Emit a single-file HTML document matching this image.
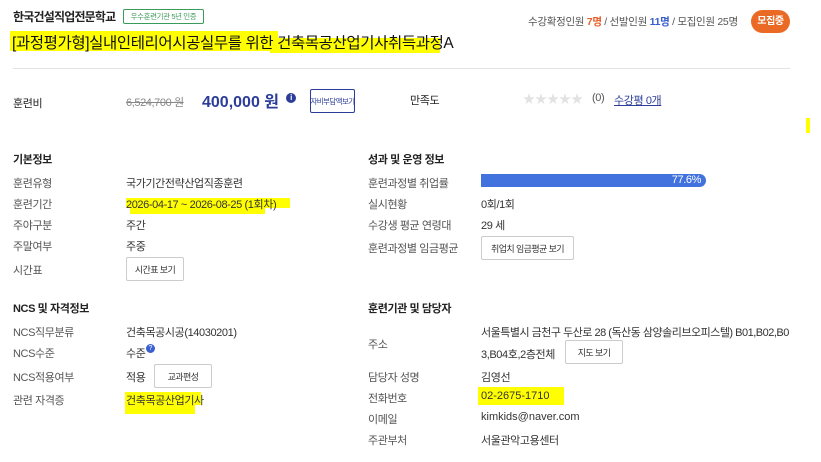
<!DOCTYPE html>
<html><head><meta charset="utf-8"><style>
*{margin:0;padding:0;box-sizing:border-box}
body{width:821px;height:462px;background:#fff;font-family:"Liberation Sans","Noto Sans CJK KR",sans-serif;color:#333;position:relative;overflow:hidden;font-size:11px;letter-spacing:-0.4px}
.a{position:absolute;white-space:nowrap}
.hl{position:absolute;background:#ffff00}
.btn{position:absolute;border:1px solid #ccc;border-radius:2px;background:#fff;font-size:9px;color:#333;display:flex;align-items:center;justify-content:center;white-space:nowrap;letter-spacing:-0.6px}
.lab{color:#555}
.h{font-weight:bold;color:#222;font-size:11px}
</style></head><body>
<div class="a" style="left:13px;top:8px;font-size:12px;font-weight:bold;color:#222;letter-spacing:-0.8px">한국건설직업전문학교</div>
<div class="a" style="left:123px;top:9px;width:81px;height:15px;border:1px solid #3a9a5a;border-radius:2px;color:#3a9a5a;font-size:7.5px;line-height:13px;text-align:center">우수훈련기관 5년 인증</div>
<div class="hl" style="left:10px;top:31px;width:268px;height:20px"></div>
<div class="hl" style="left:270px;top:38px;width:170px;height:15px"></div>
<div class="a" style="left:12px;top:31px;font-size:15.5px;color:#111;letter-spacing:-0.4px">[과정평가형]실내인테리어시공실무를 위한 건축목공산업기사취득과정A</div>
<div class="a" style="left:528px;top:14px;font-size:10.5px;color:#555;letter-spacing:-0.3px">수강확정인원 <b style="color:#e8602c">7명</b> / 선발인원 <b style="color:#3a5fd0">11명</b> / 모집인원 25명</div>
<div class="a" style="left:751px;top:10px;width:39px;height:23px;border-radius:12px;background:#ea6a25;color:#fff;font-size:10px;font-weight:bold;line-height:23px;text-align:center">모집중</div>
<div class="a" style="left:13px;top:68px;width:777px;height:1px;background:#e3e3e3"></div>
<div class="a" style="left:13px;top:95px;font-size:11px;color:#222">훈련비</div>
<div class="a" style="left:126px;top:94px;font-size:11px;color:#888;text-decoration:line-through">6,524,700 원</div>
<div class="a" style="left:202px;top:88px;font-size:16px;color:#2c3d99;font-weight:bold;letter-spacing:0">400,000 원</div>
<div class="a" style="left:286px;top:93px;width:10px;height:10px;border-radius:50%;background:#2c3d99;color:#fff;font-size:8px;line-height:10px;text-align:center;font-weight:bold">i</div>
<div class="btn" style="left:310px;top:89px;width:45px;height:24px;border-color:#2c3d99;color:#2c3d99;font-size:7.5px">자비부담액보기</div>
<div class="a" style="left:410px;top:92px;font-size:11px;color:#222">만족도</div>
<div class="a" style="left:523px;top:90px;font-size:12px;color:#e2e2e2;letter-spacing:0">★★★★★</div>
<div class="a" style="left:592px;top:92px;font-size:11px;color:#555">(0)</div>
<div class="a" style="left:614px;top:92px;font-size:11px;color:#2c3d99;text-decoration:underline">수강평 0개</div>
<div class="hl" style="left:806px;top:118px;width:4px;height:15px"></div>

<div class="a h" style="left:13px;top:151px">기본정보</div>
<div class="a lab" style="left:13px;top:175px">훈련유형</div><div class="a" style="left:126px;top:175px">국가기간전략산업직종훈련</div>
<div class="hl" style="left:126px;top:198px;width:164px;height:10px"></div><div class="hl" style="left:130px;top:206px;width:135px;height:8px"></div>
<div class="a lab" style="left:13px;top:196px">훈련기간</div><div class="a" style="left:126px;top:196px">2026-04-17 ~ 2026-08-25 (1회차)</div>
<div class="a lab" style="left:13px;top:217px">주야구분</div><div class="a" style="left:126px;top:217px">주간</div>
<div class="a lab" style="left:13px;top:238px">주말여부</div><div class="a" style="left:126px;top:238px">주중</div>
<div class="a lab" style="left:13px;top:262px">시간표</div><div class="btn" style="left:126px;top:257px;width:58px;height:24px">시간표 보기</div>

<div class="a h" style="left:368px;top:151px">성과 및 운영 정보</div>
<div class="a lab" style="left:368px;top:175px">훈련과정별 취업률</div>
<div class="a" style="left:481px;top:174px;width:225px;height:13px;background:#4272dd;border-radius:0 7px 7px 0;color:#fff;font-size:11px;line-height:13px;text-align:right;padding-right:5px">77.6%</div>
<div class="a lab" style="left:368px;top:196px">실시현황</div><div class="a" style="left:481px;top:196px">0회/1회</div>
<div class="a lab" style="left:368px;top:217px">수강생 평균 연령대</div><div class="a" style="left:481px;top:217px">29 세</div>
<div class="a lab" style="left:368px;top:240px">훈련과정별 임금평균</div><div class="btn" style="left:481px;top:236px;width:93px;height:24px">취업치 임금평균 보기</div>

<div class="a h" style="left:13px;top:300px">NCS 및 자격정보</div>
<div class="a lab" style="left:13px;top:324px">NCS직무분류</div><div class="a" style="left:126px;top:324px">건축목공시공(14030201)</div>
<div class="a lab" style="left:13px;top:345px">NCS수준</div><div class="a" style="left:126px;top:345px">수준</div>
<div class="a" style="left:146px;top:344px;width:9px;height:9px;border-radius:50%;background:#3a5fd0;color:#fff;font-size:7px;line-height:9px;text-align:center;letter-spacing:0">?</div>
<div class="a lab" style="left:13px;top:369px">NCS적용여부</div><div class="a" style="left:126px;top:369px">적용</div>
<div class="btn" style="left:154px;top:364px;width:58px;height:24px">교과편성</div>
<div class="hl" style="left:125px;top:392px;width:76px;height:13px"></div><div class="hl" style="left:125px;top:404px;width:70px;height:10px"></div>
<div class="a lab" style="left:13px;top:392px">관련 자격증</div><div class="a" style="left:126px;top:392px">건축목공산업기사</div>

<div class="a h" style="left:368px;top:300px">훈련기관 및 담당자</div>
<div class="a lab" style="left:368px;top:336px">주소</div>
<div class="a" style="left:481px;top:324px;letter-spacing:-0.5px">서울특별시 금천구 두산로 28 (독산동 삼양솔리브오피스텔) B01,B02,B0</div>
<div class="a" style="left:481px;top:346px">3,B04호,2층전체</div>
<div class="btn" style="left:565px;top:340px;width:58px;height:24px">지도 보기</div>
<div class="a lab" style="left:368px;top:369px">담당자 성명</div><div class="a" style="left:481px;top:369px">김영선</div>
<div class="hl" style="left:478px;top:387px;width:86px;height:18px"></div>
<div class="a lab" style="left:368px;top:390px">전화번호</div><div class="a" style="left:481px;top:390px;letter-spacing:0">02-2675-1710</div>
<div class="a lab" style="left:368px;top:411px">이메일</div><div class="a" style="left:481px;top:411px;letter-spacing:0">kimkids@naver.com</div>
<div class="a lab" style="left:368px;top:432px">주관부처</div><div class="a" style="left:481px;top:432px">서울관악고용센터</div>
</body></html>
